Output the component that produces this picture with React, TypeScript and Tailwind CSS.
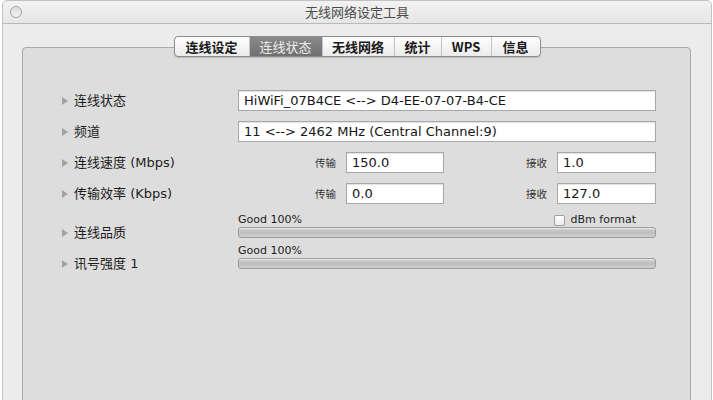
import type { ReactNode } from 'react'

const ui = { fontFamily: '"DejaVu Sans", "Noto Sans CJK SC", sans-serif' }
const cjk = { fontFamily: '"Noto Sans CJK SC", "DejaVu Sans", sans-serif' }

const tabs = [
	{ name: '连线设定', w: 'w-[74px]' },
	{ name: '连线状态', w: 'w-[73px]', active: true },
	{ name: '无线网络', w: 'w-[72px]' },
	{ name: '统计', w: 'w-[47px]' },
	{ name: 'WPS', w: 'w-[50px]' },
	{ name: '信息', w: 'w-[49px]' },
]

function Arrow() {
	return (
		<svg width="6" height="8" viewBox="0 0 6 8" className="shrink-0">
			<polygon points="0,0 6,4 0,8" fill="#a3a3a3" />
		</svg>
	)
}

function Label({ children, className = '' }: { children: ReactNode; className?: string }) {
	return (
		<div className={`w-[176px] shrink-0 flex items-center gap-[6px] text-[13px] text-[#1e1e1e] ${className}`}>
			<Arrow />
			<span className="whitespace-nowrap">{children}</span>
		</div>
	)
}

function Field({ value, className = '' }: { value: string; className?: string }) {
	return (
		<div
			className={`h-[21px] border border-[#a7a7a7] bg-white shadow-[inset_0_1px_1px_rgba(0,0,0,0.12)] pl-[5px] text-[13px] leading-[19px] text-[#151515] whitespace-nowrap overflow-hidden ${className}`}
		>
			{value}
		</div>
	)
}

function SmallLabel({ children }: { children: ReactNode }) {
	return (
		<span className="text-[10.5px] text-[#333] mr-[10px]" style={cjk}>
			{children}
		</span>
	)
}

function Bar() {
	return (
		<div className="flex-1 h-[11px] rounded-[3px] border border-[#9c9c9c] bg-gradient-to-b from-[#d4d4d4] via-[#bdbdbd] to-[#cfcfcf] shadow-[inset_0_1px_0_rgba(255,255,255,0.5)]" />
	)
}

export default function App() {
	return (
		<div className="w-[713px] h-[400px] overflow-hidden bg-white" style={ui}>
			<div className="ml-[2px] w-[710px] h-[410px] border border-[#c2c2c2] rounded-t-[5px] bg-[#ececec] flex flex-col">
				<div className="h-[23px] shrink-0 flex items-center px-[7px] border-b border-[#b9b9b9] bg-gradient-to-b from-[#f2f2f2] to-[#e6e6e6] rounded-t-[5px]">
					<div className="w-[12px] h-[12px] rounded-full border border-[#a5a5a5] bg-gradient-to-b from-[#dcdcdc] to-[#f4f4f4]" />
					<div className="flex-1 text-center text-[13px] text-[#4c4c4c] pr-[12px]" style={cjk}>
						无线网络设定工具
					</div>
				</div>

				<div className="flex-1 flex flex-col pt-[12px]">
					<div className="relative z-10 self-center flex h-[21px] rounded-[4px] border border-[#8c8c8c] bg-gradient-to-b from-[#ffffff] to-[#ebebeb] shadow-[0_1px_1px_rgba(0,0,0,0.15)] overflow-hidden">
						{tabs.map((t, i) => (
							<div
								key={t.name}
								className={`${t.w} flex items-center justify-center text-[13px] ${i > 0 ? 'border-l border-[#c4c4c4]' : ''} ${
									t.active
										? 'bg-gradient-to-b from-[#8a8a8a] to-[#707070] text-[#ececec] border-[#6a6a6a]'
										: 'font-bold text-[#1a1a1a]'
								}`}
								style={cjk}
							>
								{t.name}
							</div>
						))}
					</div>

					<div className="-mt-[10px] ml-[19px] w-[669px] flex-1 rounded-t-[4px] border border-[#a9a9a9] bg-[#dddddd] pl-[39px] pr-[34px] pt-[42px]">
						<div className="flex flex-col gap-[10px]">
							<div className="flex items-center">
								<Label>连线状态</Label>
								<Field value="HiWiFi_07B4CE <--> D4-EE-07-07-B4-CE" className="flex-1" />
							</div>
							<div className="flex items-center">
								<Label>频道</Label>
								<Field value="11 <--> 2462 MHz (Central Channel:9)" className="flex-1" />
							</div>
							<div className="flex items-center">
								<Label>连线速度 (Mbps)</Label>
								<div className="w-[206px] flex items-center justify-end">
									<SmallLabel>传输</SmallLabel>
									<Field value="150.0" className="w-[98px]" />
								</div>
								<div className="flex-1 flex items-center justify-end">
									<SmallLabel>接收</SmallLabel>
									<Field value="1.0" className="w-[99px]" />
								</div>
							</div>
							<div className="flex items-center">
								<Label>传输效率 (Kbps)</Label>
								<div className="w-[206px] flex items-center justify-end">
									<SmallLabel>传输</SmallLabel>
									<Field value="0.0" className="w-[98px]" />
								</div>
								<div className="flex-1 flex items-center justify-end">
									<SmallLabel>接收</SmallLabel>
									<Field value="127.0" className="w-[99px]" />
								</div>
							</div>
						</div>

						<div className="mt-[9px]">
							<div className="flex">
								<div className="w-[176px] shrink-0" />
								<div className="flex-1 flex items-center justify-between h-[14px] text-[11px] text-[#1e1e1e] pr-[20px]">
									<span>Good 100%</span>
									<span className="flex items-center gap-[6px]">
										<span className="w-[11px] h-[11px] rounded-[2px] border border-[#a0a0a0] bg-gradient-to-b from-[#ffffff] to-[#ececec]" />
										<span>dBm format</span>
									</span>
								</div>
							</div>
							<div className="flex items-center h-[11px]">
								<Label>连线品质</Label>
								<Bar />
							</div>
						</div>

						<div className="mt-[6px]">
							<div className="flex">
								<div className="w-[176px] shrink-0" />
								<div className="flex-1 h-[14px] flex items-center text-[11px] text-[#1e1e1e]">Good 100%</div>
							</div>
							<div className="flex items-center h-[11px]">
								<Label>讯号强度 1</Label>
								<Bar />
							</div>
						</div>
					</div>
				</div>
			</div>
		</div>
	)
}
